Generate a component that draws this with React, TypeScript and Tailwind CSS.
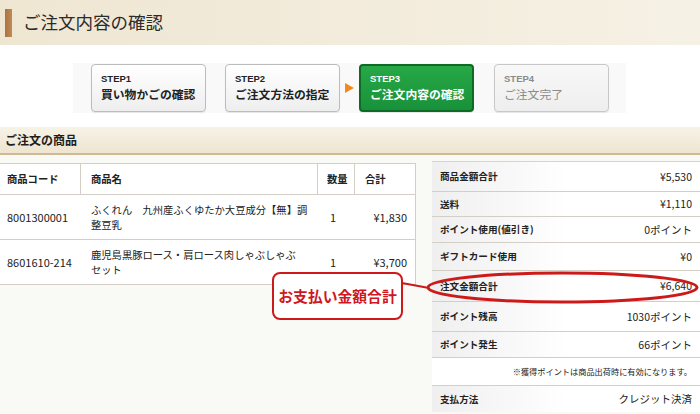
import React from 'react';

const font = 'font-["Noto_Sans_CJK_JP","Noto_Sans",sans-serif]';

type Step = { label: string; title: string; state: 'done' | 'current' | 'todo' };

const steps: Step[] = [
  { label: 'STEP1', title: '買い物かごの確認', state: 'done' },
  { label: 'STEP2', title: 'ご注文方法の指定', state: 'done' },
  { label: 'STEP3', title: 'ご注文内容の確認', state: 'current' },
  { label: 'STEP4', title: 'ご注文完了', state: 'todo' },
];

// product names are split where the original page wraps them
const items = [
  { code: '8001300001', name: ['ふくれん　九州産ふくゆたか大豆成分【無】調', '整豆乳'], qty: '1', total: '¥1,830' },
  { code: '8601610-214', name: ['鹿児島黒豚ロース・肩ロース肉しゃぶしゃぶ', 'セット'], qty: '1', total: '¥3,700' },
];

const summary = [
  { label: '商品金額合計', value: '¥5,530', h: 'h-[30px]' },
  { label: '送料', value: '¥1,110', h: 'h-[25px]' },
  { label: 'ポイント使用(値引き)', value: '0ポイント', h: 'h-[26px]' },
  { label: 'ギフトカード使用', value: '¥0', h: 'h-[28px]' },
  { label: '注文金額合計', value: '¥6,640', h: 'h-[31px]' },
  { label: 'ポイント残高', value: '1030ポイント', h: 'h-[30px]' },
  { label: 'ポイント発生', value: '66ポイント', h: 'h-[26px]' },
];

const StepBox: React.FC<{ step: Step }> = ({ step }) => {
  const cls =
    step.state === 'current'
      ? 'bg-gradient-to-b from-[#27a846] to-[#17923a] border-2 border-[#0f6a25] text-white'
      : step.state === 'done'
        ? 'bg-gradient-to-b from-white to-[#eeeeee] border-[1.5px] border-[#bcbcbc] text-[#222]'
        : 'bg-gradient-to-b from-[#f8f8f8] to-[#eeeeee] border-[1.5px] border-[#c8c8c8] text-[#8a8a8a]';
  return (
    <div className={`w-[115px] h-[48px] rounded-[4px] flex flex-col justify-center pl-[9px] shadow-[0_1px_1px_rgba(0,0,0,0.08)] ${cls}`}>
      <span className="text-[9.5px] font-bold leading-[12px] font-['Liberation_Sans',sans-serif]">{step.label}</span>
      <span className={`text-[11.8px] leading-[18px] ${step.state === 'todo' ? 'font-normal' : 'font-bold'}`}>{step.title}</span>
    </div>
  );
};

export default function App() {
  return (
    <div className={`relative w-[700px] h-[414px] overflow-hidden bg-white text-[#222] ${font}`}>
      <header className="h-[45px] flex items-center bg-gradient-to-r from-[#efe6d2] to-[#f6f1e5]">
        <div className="ml-[5px] w-[7px] h-[28px] bg-gradient-to-r from-[#a8743f] to-[#c08a55]" />
        <h1 className="ml-[11px] text-[17.5px] text-[#2b2b2b]">ご注文内容の確認</h1>
      </header>

      <div className="h-[82px] pt-[18px]">
        <div className="ml-[73px] w-[553px] h-[50px] bg-[#f9f9f9] flex items-center pl-[18px]">
          <StepBox step={steps[0]} />
          <div className="w-[19px]" />
          <StepBox step={steps[1]} />
          <div className="w-[19px] flex justify-center">
            <div className="w-0 h-0 border-y-[5px] border-y-transparent border-l-[9px] border-l-[#f08a1e]" />
          </div>
          <StepBox step={steps[2]} />
          <div className="w-[20px]" />
          <StepBox step={steps[3]} />
        </div>
      </div>

      <div className="h-[28px] flex items-center pl-[5px] bg-gradient-to-b from-[#f7f2e7] to-[#eee5d1] border-b-2 border-[#cfb994]">
        <h2 className="text-[12px] font-bold text-[#1e1e1e]">ご注文の商品</h2>
      </div>

      <div className="flex items-start bg-[#f9f9f6] h-[259px]">
        <div className="w-[416px] mt-[8px] bg-white border-r border-[#d3cfc6] text-[10.3px]">
          <div className="grid grid-cols-[81px_237px_37px_61px] h-[32px] border-y border-[#d3cfc6] font-bold">
            <div className="flex items-center pl-[7px] border-r border-[#d3cfc6]">商品コード</div>
            <div className="flex items-center pl-[10px] border-r border-[#d3cfc6]">商品名</div>
            <div className="flex items-center pl-[9px] border-r border-[#d3cfc6]">数量</div>
            <div className="flex items-center pl-[10px]">合計</div>
          </div>
          {items.map((item) => (
            <div key={item.code} className="grid grid-cols-[81px_237px_37px_61px] h-[45px] border-b border-[#d3cfc6]">
              <div className="flex items-center pl-[7px] text-[11px]">{item.code}</div>
              <div className="flex flex-col justify-center pl-[10px] leading-[15px] whitespace-nowrap">
                {item.name.map((line) => (
                  <span key={line}>{line}</span>
                ))}
              </div>
              <div className="flex items-center pl-[12px] text-[11px]">{item.qty}</div>
              <div className="flex items-center justify-end pr-[9px] text-[11px]">{item.total}</div>
            </div>
          ))}
        </div>

        <div className="ml-[16px] flex-1 mt-[6px] bg-white border-t border-[#d8d4cc] text-[9.6px]">
          {summary.map((row) => (
            <div key={row.label} className={`flex ${row.h} border-b border-[#d3cfc6]`}>
              <div className="w-[135px] flex items-center pl-[8px] font-bold bg-gradient-to-r from-[#efefef] to-white">{row.label}</div>
              <div className="flex-1 flex items-center justify-end pr-[8px] text-[10.5px]">{row.value}</div>
            </div>
          ))}
          <div className="h-[28px] flex items-center justify-end pr-[8px] text-[8.2px] border-b border-[#d3cfc6]">
            ※獲得ポイントは商品出荷時に有効になります。
          </div>
          <div className="flex h-[26px]">
            <div className="w-[135px] flex items-center pl-[8px] font-bold bg-gradient-to-r from-[#efefef] to-white">支払方法</div>
            <div className="flex-1 flex items-center justify-end pr-[8px] text-[10.5px]">クレジット決済</div>
          </div>
        </div>
      </div>

      <svg className="absolute left-0 top-0 pointer-events-none" width="700" height="414">
        <line x1="402" y1="283" x2="429" y2="288" stroke="#cc1a1a" strokeWidth="2" />
        <ellipse cx="562.5" cy="287.5" rx="134.5" ry="14.5" fill="none" stroke="#cc1a1a" strokeWidth="3" />
      </svg>

      <div className="absolute left-[272px] top-[272px] w-[131px] h-[48px] rounded-[8px] border-[2.5px] border-[#cc1a1a] bg-white flex items-center justify-center">
        <span className="text-[14.8px] font-bold text-[#d0161e]">お支払い金額合計</span>
      </div>
    </div>
  );
}
